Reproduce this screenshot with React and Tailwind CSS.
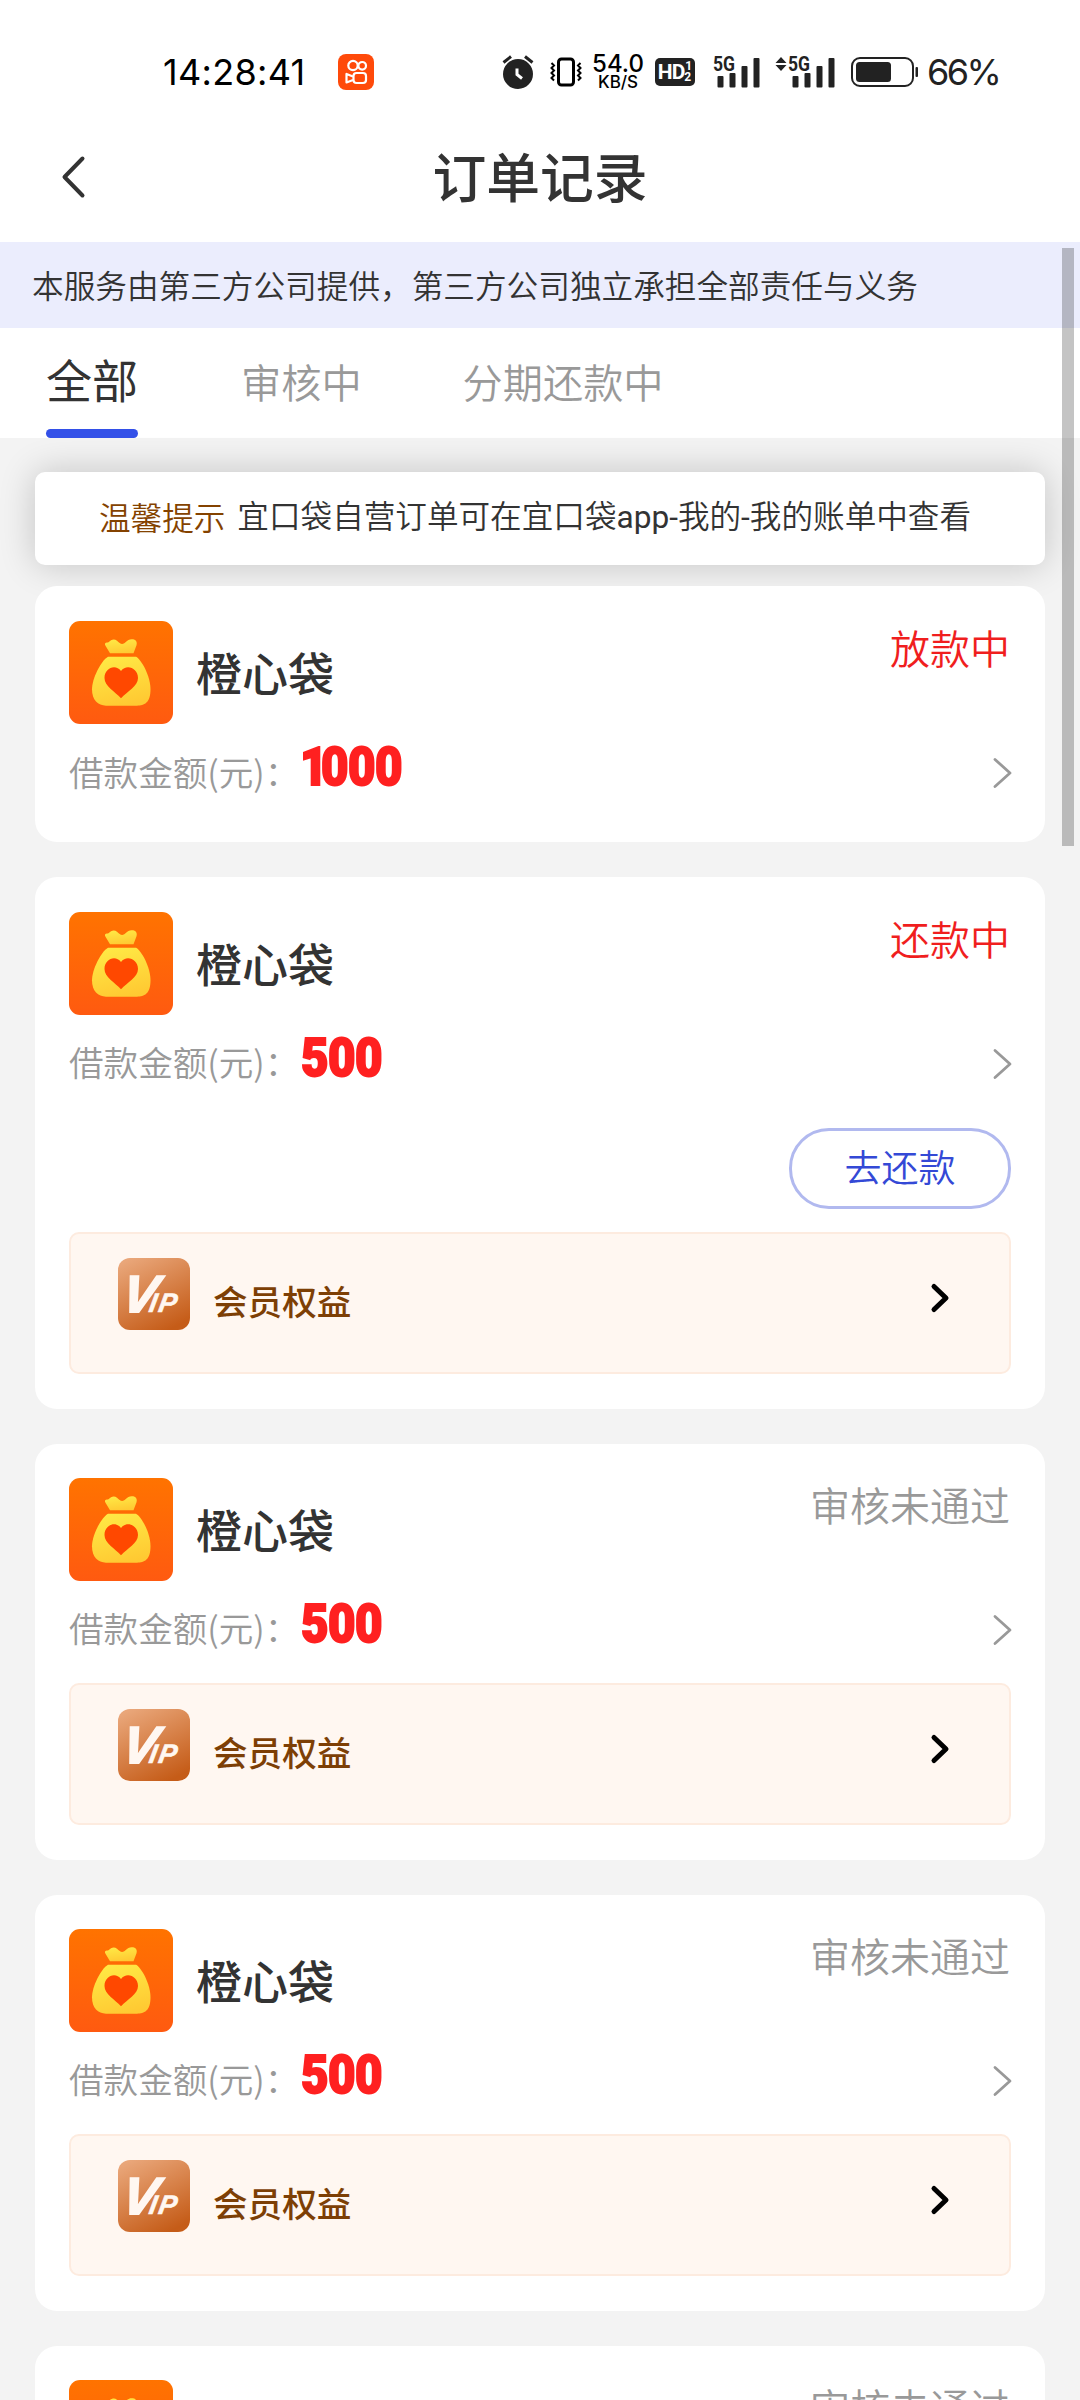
import React from 'react';

const orders = [
  { id: 1, name: '橙心袋', amount: 1000, status: 'lending', canRepay: false, vip: false },
  { id: 2, name: '橙心袋', amount: 500, status: 'repaying', canRepay: true, vip: true },
  { id: 3, name: '橙心袋', amount: 500, status: 'rejected', canRepay: false, vip: true },
  { id: 4, name: '橙心袋', amount: 500, status: 'rejected', canRepay: false, vip: true },
  { id: 5, name: '橙心袋', amount: 500, status: 'rejected', canRepay: false, vip: true }
];

export default function App() {
  return (
    <div className="relative w-[1080px] h-[2400px] overflow-hidden bg-[#f3f3f3] text-[#333] font-['Noto_Sans_CJK_SC',sans-serif] font-[350]">
      <div className="bg-white">
        <StatusBar />
        <NavBar title="订单记录" />
      </div>

      <div className="h-[86px] flex items-center pl-8 bg-[#ebedfd] text-[31.65px] whitespace-nowrap">
        本服务由第三方公司提供，第三方公司独立承担全部责任与义务
      </div>

      <Tabs />

      <div className="px-[35px] pt-[34px]">
        {/* 提示 */}
        <div className="h-[93px] mb-[21px] pb-[4px] pr-[10px] flex items-center justify-center gap-3 rounded-[10px] bg-white text-[31.6px] whitespace-nowrap shadow-[0_0_36px_rgba(0,0,0,0.2)]">
          <span className="text-[#844200]">温馨提示</span>
          <span>
            宜口袋自营订单可在宜口袋<span className="font-['Roboto',sans-serif] font-normal">app-</span>我的<span className="font-['Roboto',sans-serif] font-normal">-</span>我的账单中查看
          </span>
        </div>

        {/* 订单列表 */}
        <div className="relative flex flex-col gap-[35px]">
          {orders.map(order => (
            <OrderCard key={order.id} order={order} />
          ))}
        </div>
      </div>

      {/* 滚动条 */}
      <div className="absolute top-[248px] right-[6px] w-3 h-[598px] bg-black/23"></div>
    </div>
  );
}

function StatusBar() {
  return (
    <div className="h-[112px] pt-[32px] pl-[163px] flex items-center font-['Inter','Noto_Sans_CJK_SC',sans-serif] text-[#222]">
      <div className="w-[175px] text-[36px] font-normal leading-none text-black tracking-[0.3px]">14:28:41</div>
      <KuaishouIcon />
      <div className="ml-[128px] flex items-center">
        <AlarmIcon />
        <VibrateIcon />
        <div className="w-[54px] ml-[9px] flex flex-col items-center text-black font-medium">
          <span className="text-[24px] leading-[21px]">54.0</span>
          <span className="text-[17px] leading-[17px]">KB/S</span>
        </div>
        <div className="ml-[10px] w-10 h-7 flex items-center justify-center rounded-[5px] bg-[#222] text-white font-['Roboto',sans-serif] font-bold">
          <span className="text-[21px] leading-none tracking-[-1px]">HD</span>
          <span className="flex flex-col text-[12px] leading-[11px]">
            <span className="pl-px">1</span>
            <span>2</span>
          </span>
        </div>
        <Signal className="ml-[18px] overflow-visible" />
        <Signal className="ml-[13px] overflow-visible" data />
        <BatteryIcon />
      </div>
      <div className="ml-[8px] text-[36px] font-normal leading-none tracking-[-2.600px]">66%</div>
    </div>
  );
}

function NavBar({ title }) {
  return (
    <div className="h-[130px] grid grid-cols-[180px_1fr_180px] items-center">
      <svg className="ml-[60px]" width="27" height="44" viewBox="0 0 27 44" fill="none" stroke="#333" strokeWidth="4" strokeLinecap="round" strokeLinejoin="round">
        <path d="M22.500 3.500 4.500 22l18 18.500" />
      </svg>
      <h1 className="pb-[4px] text-center text-[53.8px] font-medium leading-none">{title}</h1>
    </div>
  );
}

function Tabs() {
  return (
    <div className="h-[110px] flex bg-white whitespace-nowrap">
      <div className="ml-[46px] w-[92px] flex flex-col justify-between text-[46px] font-normal">
        <span className="h-[101px] leading-[101px]">全部</span>
        <span className="h-[9px] rounded-[5px] bg-[#3350e8]"></span>
      </div>
      <div className="ml-[103px] text-[40.2px] leading-[106px] text-[#999]">审核中</div>
      <div className="ml-[101px] text-[40.2px] leading-[106px] text-[#999]">分期还款中</div>
    </div>
  );
}

function OrderCard({ order }) {
  const getStatusColor = (status) => {
    switch (status) {
      case 'lending': return 'text-[#f01e1e]';
      case 'repaying': return 'text-[#f01e1e]';
      default: return 'text-[#999]';
    }
  };

  const getStatusText = (status) => {
    switch (status) {
      case 'lending': return '放款中';
      case 'repaying': return '还款中';
      default: return '审核未通过';
    }
  };

  const tight = order.vip && !order.canRepay;

  return (
    <div className={`px-[34px] ${tight ? 'pt-[34px]' : 'pt-[35px]'} pb-[35px] rounded-[22px] bg-white`}>
      <div className="h-[103px] flex">
        <BagIcon />
        <h2 className="ml-[23px] flex-1 text-[46px] font-medium leading-[101px]">{order.name}</h2>
        <div className={`mr-px text-[40px] leading-[52px] ${getStatusColor(order.status)}`}>
          {getStatusText(order.status)}
        </div>
      </div>

      <div className={`${order.vip ? 'h-[82px]' : 'h-[83px]'} pt-[15px] -mr-px flex items-center`}>
        <span className="w-[232px] pb-[4px] text-[34.6px] leading-none text-[#999] whitespace-nowrap">借款金额(元)：</span>
        <Amount value={order.amount} />
        <svg width="20" height="32" viewBox="0 0 20 32" fill="none" stroke="#999" strokeWidth="2.8" strokeLinecap="round" strokeLinejoin="round">
          <path d="M3 2.500 18 16 3 29.500" />
        </svg>
      </div>

      {order.canRepay && (
        <div className="pt-[31px] -mb-[1px] flex justify-end">
          <button className="w-[222px] h-[81px] pb-[4px] border-[3px] border-[#b1b9ef] rounded-[40px] text-[37px] leading-none text-[#3449d6]">
            去还款
          </button>
        </div>
      )}

      {order.vip ? <VipBar tight={tight} /> : null}
    </div>
  );
}

// 数字 1 比其他数字窄，单独收紧字距
function Amount({ value }) {
  return (
    <span className="-mt-[12px] flex-1 origin-left scale-x-[0.88] text-[54px] leading-none font-black tracking-[-0.600px] text-[#ff2020] font-['Roboto',sans-serif] [-webkit-text-stroke:2px_#ff2020]">
      {String(value).split('').map((digit, i) => (
        <span key={i} className={digit === '1' ? '-ml-px tracking-[-7.500px]' : ''}>{digit}</span>
      ))}
    </span>
  );
}

function VipBar({ tight }) {
  return (
    <div className={`${tight ? 'mt-[20px]' : 'mt-[24px]'} h-[142px] pt-[24px] pl-[47px] pr-[59px] flex items-start border-2 border-[#fdebdf] rounded-[10px] bg-[#fff7f1]`}>
      <VipIcon />
      <span className="ml-[23px] flex-1 text-[34.6px] leading-[84px] font-medium text-[#7d3f05]">会员权益</span>
      <svg className="mt-[24px]" width="22" height="32" viewBox="0 0 22 32" fill="none" stroke="#000" strokeWidth="5" strokeLinecap="round" strokeLinejoin="round">
        <path d="M6 4.500 18 16 6 27.500" />
      </svg>
    </div>
  );
}

function BagIcon() {
  return (
    <svg className="shrink-0" width="104" height="103" viewBox="0 0 104 104" preserveAspectRatio="none">
      <defs>
        <linearGradient id="bagBg" x1="0" y1="0" x2="0" y2="1">
          <stop offset="0" stopColor="#ff7300" />
          <stop offset="1" stopColor="#ff5a10" />
        </linearGradient>
        <linearGradient id="bagBody" x1="0.300" y1="0" x2="0.600" y2="1">
          <stop offset="0" stopColor="#ffe945" />
          <stop offset="1" stopColor="#ffc932" />
        </linearGradient>
      </defs>
      <rect width="104" height="104" rx="11" fill="url(#bagBg)" />
      <path d="M41 32.500 36.500 25c-1.500-3 .5-3 3-3.500 2.500-2.500 5.500-4 8.500-1.500 3 3 5.500 4.500 8.500 1.500 2.500-2.500 4.500-3.500 7.500-3 3 .5 4.500 3 3.500 6L64.500 32.500Z" fill="url(#bagBody)" />
      <path d="M39 36h28c5 2.500 14.500 19 14.500 33S75 85.500 68 85.500H37C29 85.500 23 80 23 69S32 40 39 36Z" fill="url(#bagBody)" />
      <path d="M52 78C46 71 35.500 66 35.500 57.500c0-10 11-14.500 16.500-7 5.500-7.500 17-3 17 7C69 66 58 71 52 78Z" fill="#ff4800" />
    </svg>
  );
}

function VipIcon() {
  return (
    <svg className="shrink-0" width="72" height="72" viewBox="0 0 72 72">
      <defs>
        <linearGradient id="vipBg" x1="0.200" y1="0" x2="0.700" y2="1">
          <stop offset="0" stopColor="#e9a679" />
          <stop offset="1" stopColor="#c55c18" />
        </linearGradient>
      </defs>
      <rect width="72" height="72" rx="12" fill="url(#vipBg)" />
      <text transform="translate(0 54) skewX(-10)" fontFamily="Liberation Sans" fontWeight="bold" fontStyle="italic" fill="#fff7f1" stroke="#fff7f1">
        <tspan x="2" fontSize="52" strokeWidth="1.8">V</tspan>
        <tspan x="30" fontSize="27" strokeWidth="0.600" letterSpacing="2">IP</tspan>
      </text>
    </svg>
  );
}

function KuaishouIcon() {
  return (
    <svg width="36" height="36" viewBox="0 0 36 36" fill="none" stroke="#fff" strokeWidth="2.200">
      <rect width="36" height="36" rx="8" fill="#ff4a0a" stroke="none" />
      <circle cx="15" cy="11.500" r="4.700" />
      <circle cx="24.200" cy="11.800" r="3.800" />
      <rect x="15.500" y="19" width="12.500" height="10" rx="3" />
      <path d="M15 22.500 8.500 20v8.500L15 26" strokeLinejoin="round" />
    </svg>
  );
}

function AlarmIcon() {
  return (
    <svg width="32" height="36" viewBox="0 0 32 36" fill="none">
      <circle cx="16" cy="20" r="15" fill="#222" />
      <path d="M1.500 8.500 9 2.500M30.500 8.500 23 2.500" stroke="#222" strokeWidth="3" />
      <path d="M15 14.500v6l5 4" stroke="#fff" strokeWidth="3" />
    </svg>
  );
}

function VibrateIcon() {
  return (
    <svg className="ml-4" width="32" height="30" viewBox="0 0 32 30" fill="none" stroke="#000">
      <rect x="8.500" y="2" width="15" height="26" rx="3" strokeWidth="3" />
      <path d="M1.500 6 4 8.500 1.500 11 4 13.500 1.500 16 4 18.500 1.500 21 4 23.500M30.500 6 28 8.500l2.500 2.500-2.500 2.500 2.500 2.500-2.500 2.500 2.500 2.500-2.500 2.500" strokeWidth="2" />
    </svg>
  );
}

function Signal({ className, data }) {
  return (
    <svg className={className} width={data ? 62 : 49} height="34" viewBox={data ? '-13 0 62 34' : '0 0 49 34'} fill="#222">
      {data && <path d="M-7 2-1.500 8h-11ZM-7 16-1.500 10h-11Z" />}
      <text x="0" y="16" fontFamily="Roboto" fontWeight="700" fontSize="20" textLength="22" lengthAdjust="spacingAndGlyphs">5G</text>
      <rect x="4.500" y="21" width="6" height="11.500" rx="1" />
      <rect x="16.500" y="18" width="6" height="14.500" rx="1" />
      <rect x="28.500" y="11" width="6" height="21.500" rx="1" />
      <rect x="40.500" y="3" width="6" height="29.500" rx="1" />
    </svg>
  );
}

function BatteryIcon() {
  return (
    <svg className="ml-[14px]" width="68" height="30" viewBox="0 0 68 30">
      <rect x="1" y="1" width="61" height="28" rx="8" fill="none" stroke="#222" strokeWidth="2" />
      <rect x="5" y="5" width="35" height="20" rx="3.500" fill="#222" />
      <rect x="64.500" y="10" width="2.500" height="10" rx="1" fill="#222" />
    </svg>
  );
}
